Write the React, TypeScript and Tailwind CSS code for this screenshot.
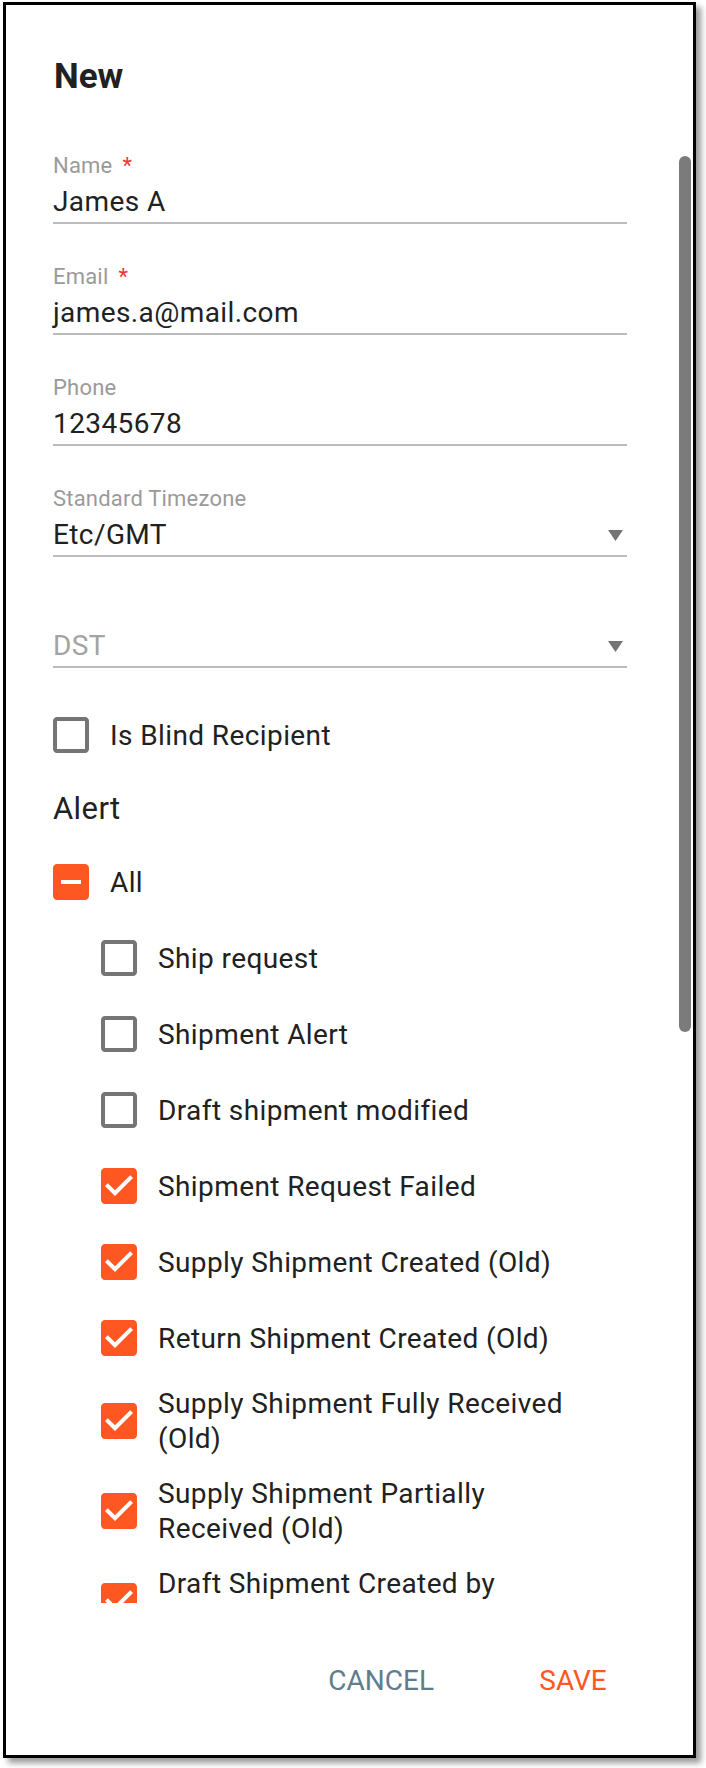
type BoxState = "off" | "on" | "some";

const fields = [
  { label: "Name", value: "James A", required: true },
  { label: "Email", value: "james.a@mail.com", required: true },
  { label: "Phone", value: "12345678" },
  { label: "Standard Timezone", value: "Etc/GMT", select: true },
  { label: "", value: "DST", select: true, placeholder: true },
];

const alerts: { label: string; state: BoxState }[] = [
  { label: "Ship request", state: "off" },
  { label: "Shipment Alert", state: "off" },
  { label: "Draft shipment modified", state: "off" },
  { label: "Shipment Request Failed", state: "on" },
  { label: "Supply Shipment Created (Old)", state: "on" },
  { label: "Return Shipment Created (Old)", state: "on" },
  { label: "Supply Shipment Fully Received (Old)", state: "on" },
  { label: "Supply Shipment Partially Received (Old)", state: "on" },
  { label: "Draft Shipment Created by Supplier", state: "on" },
  { label: "Draft Shipment Submitted", state: "on" },
];

function CheckIcon({ state }: { state: BoxState }) {
  if (state === "off") {
    return (
      <svg viewBox="0 0 24 24" className="-ml-[6px] h-[48px] w-[48px] shrink-0 fill-[#757575]">
        <path d="M19 5v14H5V5h14m0-2H5c-1.1 0-2 .9-2 2v14c0 1.1.9 2 2 2h14c1.1 0 2-.9 2-2V5c0-1.1-.9-2-2-2z" />
      </svg>
    );
  }
  if (state === "some") {
    return (
      <svg viewBox="0 0 24 24" className="-ml-[6px] h-[48px] w-[48px] shrink-0 fill-[#ff5722]">
        <path d="M19 3H5c-1.1 0-2 .9-2 2v14c0 1.1.9 2 2 2h14c1.1 0 2-.9 2-2V5c0-1.1-.9-2-2-2zm-2 10H7v-2h10v2z" />
      </svg>
    );
  }
  return (
    <svg viewBox="0 0 24 24" className="-ml-[6px] h-[48px] w-[48px] shrink-0 fill-[#ff5722]">
      <path d="M19 3H5c-1.11 0-2 .9-2 2v14c0 1.1.89 2 2 2h14c1.11 0 2-.9 2-2V5c0-1.1-.89-2-2-2zm-9 14l-5-5 1.41-1.41L10 14.17l7.59-7.59L19 8l-9 9z" />
    </svg>
  );
}

function CheckRow({ label, state, indent }: { label: string; state: BoxState; indent?: boolean }) {
  return (
    <div className={`flex min-h-[76px] items-center py-[10px] ${indent ? "pl-[48px]" : ""}`}>
      <CheckIcon state={state} />
      <span className="ml-[15px] max-w-[428px] text-[28px] leading-[35px] tracking-[0.4px] text-[#212121]">
        {label}
      </span>
    </div>
  );
}

function Field({
  label,
  value,
  required,
  select,
  placeholder,
  last,
}: {
  label: string;
  value: string;
  required?: boolean;
  select?: boolean;
  placeholder?: boolean;
  last?: boolean;
}) {
  return (
    <div className={`border-b-2 border-[#bdbdbd] pb-[2px] ${last ? "mb-[29px]" : "mb-[41px]"}`}>
      <div className="h-[24px] text-[22px] leading-[24px] tracking-[0.2px] text-[#9a9a9a]">
        {label}
        {required && <span className="ml-[10px] text-[#e53935]">*</span>}
      </div>
      <div className="mt-[6px] flex items-center justify-between">
        <span
          className={`text-[28px] leading-[36px] tracking-[0.4px] ${placeholder ? "text-[#a3a3a3]" : "text-[#212121]"}`}
        >
          {value}
        </span>
        {select && (
          <svg viewBox="0 0 15 11" className="mr-[4px] h-[11px] w-[15px] fill-[#757575]">
            <polygon points="0,0 15,0 7.5,11" />
          </svg>
        )}
      </div>
    </div>
  );
}

export default function App() {
  return (
    <div className="min-h-screen bg-white pl-[3px] pt-[2px] font-[Roboto,sans-serif]">
      <div className="flex h-[1756px] w-[693px] flex-col border-[3px] border-black bg-white shadow-[5px_5px_6px_rgba(0,0,0,0.4)]">
        <h1 className="mb-[53px] pl-[48px] pt-[52px] text-[35px] font-bold leading-[40px] text-[#212121]">New</h1>

        <div className="flex h-[1453px] overflow-hidden">
          <div className="w-[621px] shrink-0 pl-[47px] pt-[4px]">
            {fields.map((f, i) => (
              <Field key={f.value} {...f} last={i === fields.length - 1} />
            ))}

            <CheckRow label="Is Blind Recipient" state="off" />

            <div className="pb-[17px] pt-[18px] text-[31px] leading-[36px] tracking-[0.4px] text-[#212121]">Alert</div>

            <CheckRow label="All" state="some" />
            {alerts.map((a) => (
              <CheckRow key={a.label} label={a.label} state={a.state} indent />
            ))}
          </div>

          <div className="ml-auto mr-[2px] w-[12px]">
            <div className="mt-[6px] h-[876px] w-[12px] rounded-full bg-[#7b7b7b]" />
          </div>
        </div>

        <div className="flex justify-end gap-[69px] pr-[64px] pt-[60px] text-[28px] leading-[36px]">
          <span className="px-[14px] text-[#607d8b]">CANCEL</span>
          <span className="w-[112px] text-center text-[#ff5722]">SAVE</span>
        </div>
      </div>
    </div>
  );
}
